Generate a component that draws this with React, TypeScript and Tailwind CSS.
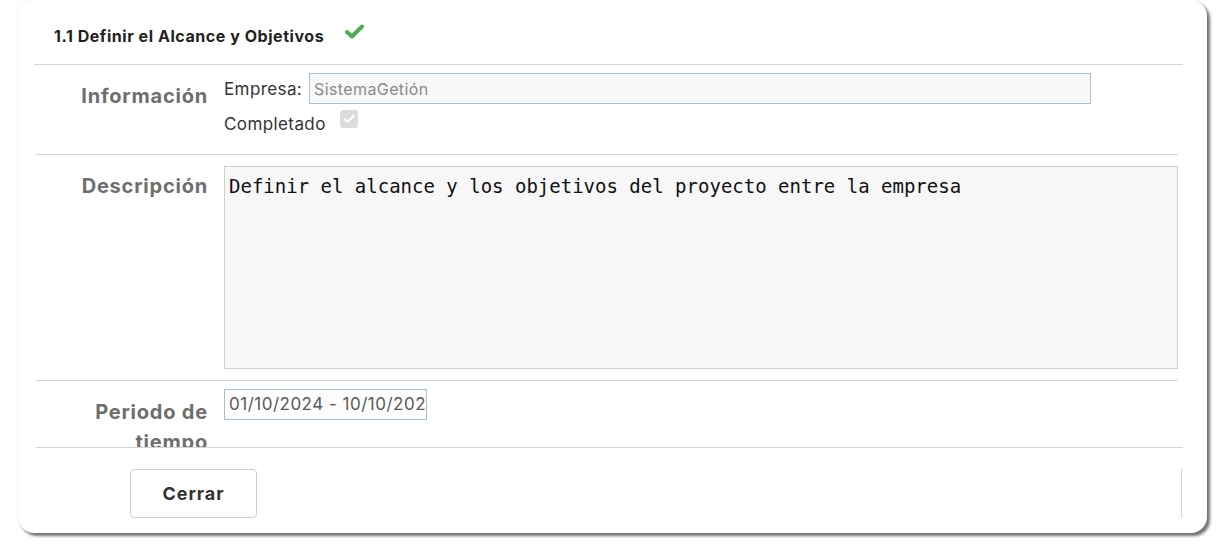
import React from "react";

const sans = { fontFamily: 'Inter, "Open Sans", sans-serif' } as React.CSSProperties;

function GreenCheck() {
  return (
    <svg width="19" height="15" viewBox="0 0 19 15" className="mt-[-8px]">
      <path d="M2 8 L7 12.5 L17 2.5" fill="none" stroke="#4cae4c" strokeWidth="4" strokeLinecap="round" strokeLinejoin="round" />
    </svg>
  );
}

function DisabledCheckbox() {
  return (
    <div className="w-[18px] h-[18px] rounded-[3px] bg-[#dcdcdc] flex items-center justify-center mt-[-2px] ml-[14px]">
      <svg width="12" height="10" viewBox="0 0 12 10">
        <path d="M1.5 5.2 L4.6 8 L10.5 1.8" fill="none" stroke="#ffffff" strokeWidth="2" strokeLinecap="round" strokeLinejoin="round" />
      </svg>
    </div>
  );
}

export default function App() {
  return (
    <div className="w-[1223px] h-[545px] bg-white overflow-hidden pl-[18px]" style={sans}>
      <div className="w-[1189px] h-[533px] bg-white rounded-2xl shadow-[3px_3px_3px_rgba(0,0,0,0.55),0_0_2px_rgba(0,0,0,0.12)] flex flex-col">
        {/* Header */}
        <div className="h-[64px] flex items-center pl-[36px] pt-[7px]">
          <span className="text-[16px] font-bold text-[#222] tracking-[0.55px]">1.1 Definir el Alcance y Objetivos</span>
          <span className="ml-[21px]">
            <GreenCheck />
          </span>
        </div>
        <div className="ml-[16px] w-[1149px] h-px bg-[#d4d4d4]" />

        <div className="ml-[18px] w-[1142px] flex flex-col">
          {/* Row 1 */}
          <div className="h-[90px] border-b border-[#d4d4d4] flex">
            <div className="w-[172px] shrink-0 text-right pt-[16px] leading-[30px] text-[20px] font-bold text-[#6e6e6e] tracking-[0.8px]">
              Información
            </div>
            <div className="pl-[16px] pt-[8px] flex flex-col">
              <div className="flex items-center">
                <span className="w-[85px] text-[17px] text-[#333] leading-[24px] tracking-[0.4px]">Empresa:</span>
                <div className="w-[782px] h-[31px] border border-[#a3c0de] bg-[#f8f8f8] pl-[4px] flex items-center text-[16px] text-[#8a8a8a] tracking-[0.4px]">
                  SistemaGetión
                </div>
              </div>
              <div className="flex items-start mt-[8px]">
                <span className="text-[17px] text-[#333] leading-[24px] tracking-[0.4px]">Completado</span>
                <DisabledCheckbox />
              </div>
            </div>
          </div>

          {/* Row 2 */}
          <div className="h-[226px] border-b border-[#d4d4d4] flex">
            <div className="w-[172px] shrink-0 text-right pt-[16px] leading-[30px] text-[20px] font-bold text-[#6e6e6e] tracking-[0.8px]">
              Descripción
            </div>
            <div className="pl-[16px] pt-[11px] flex-1">
              <div
                className="h-[203px] border border-[#cfcfcf] bg-[#f7f7f7] pl-[4px] pt-[8px] text-[19px] leading-[22px] text-[#111]"
                style={{ fontFamily: '"DejaVu Sans Mono", "Liberation Mono", monospace' }}
              >
                Definir el alcance y los objetivos del proyecto entre la empresa
              </div>
            </div>
          </div>

          {/* Row 3 */}
          <div className="h-[67px] border-b border-[#d4d4d4] flex overflow-hidden w-[1147px]">
            <div className="w-[172px] shrink-0 text-right pt-[16px] leading-[30px] text-[20px] font-bold text-[#6e6e6e] tracking-[0.8px]">
              Periodo de
              <br />
              tiempo
            </div>
            <div className="pl-[16px] pt-[8px]">
              <div className="w-[203px] h-[31px] border border-[#a3c0de] bg-[#fcfcfc] pl-[4px] flex items-center text-[17px] text-[#5a5a5a] tracking-[0.5px] whitespace-nowrap overflow-hidden">
                01/10/2024 - 10/10/2024
              </div>
            </div>
          </div>
        </div>

        {/* Footer */}
        <div className="ml-[112px] w-[1052px] pt-[20px] flex justify-between items-start">
          <button className="mt-[1px] w-[127px] h-[49px] border border-[#d0d0d0] rounded-[4px] bg-white text-[18px] font-bold text-[#333] tracking-[0.9px]">
            Cerrar
          </button>
          <div className="w-px h-[50px] bg-[#d6d6d6]" />
        </div>
      </div>
    </div>
  );
}
